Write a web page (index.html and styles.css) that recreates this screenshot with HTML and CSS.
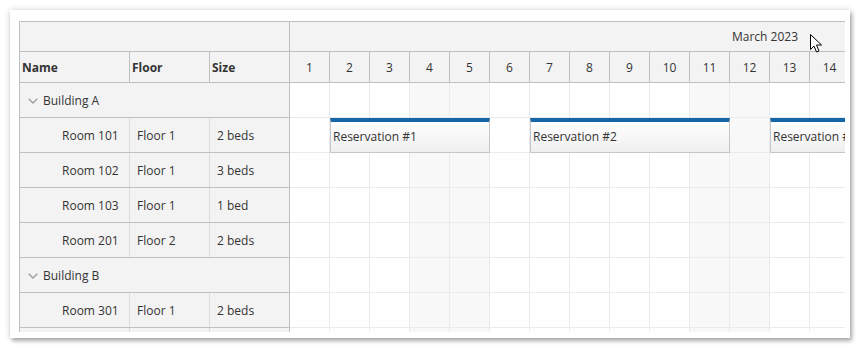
FILE: index.html
```html
<!DOCTYPE html>
<html>
<head>
<meta charset="utf-8">
<link rel="stylesheet" href="styles.css">
</head>
<body>
<div class="window">
  <div class="scheduler">
    <div class="rowheaders">
      <div class="corner"></div>
      <div class="colheads">
        <div class="hc name">Name</div>
        <div class="hc floor">Floor</div>
        <div class="hc size">Size</div>
      </div>
      <div class="rrow group"><svg class="chev" width="10" height="6" viewBox="0 0 10 6"><path d="M0.7 0.7 L5 5 L9.3 0.7" fill="none" stroke="#a0a0a0" stroke-width="1.4"/></svg>Building A</div>
      <div class="rrow"><div class="rc name">Room 101</div><div class="rc floor">Floor 1</div><div class="rc size">2 beds</div></div>
      <div class="rrow"><div class="rc name">Room 102</div><div class="rc floor">Floor 1</div><div class="rc size">3 beds</div></div>
      <div class="rrow"><div class="rc name">Room 103</div><div class="rc floor">Floor 1</div><div class="rc size">1 bed</div></div>
      <div class="rrow"><div class="rc name">Room 201</div><div class="rc floor">Floor 2</div><div class="rc size">2 beds</div></div>
      <div class="rrow group"><svg class="chev" width="10" height="6" viewBox="0 0 10 6"><path d="M0.7 0.7 L5 5 L9.3 0.7" fill="none" stroke="#a0a0a0" stroke-width="1.4"/></svg>Building B</div>
      <div class="rrow"><div class="rc name">Room 301</div><div class="rc floor">Floor 1</div><div class="rc size">2 beds</div></div>
      <div class="rrow"><div class="rc name"></div><div class="rc floor"></div><div class="rc size"></div></div>
    </div>
    <div class="timeline">
      <div class="month"><span>March 2023</span></div>
      <div class="days">
        <div class="day">1</div><div class="day">2</div><div class="day">3</div><div class="day">4</div><div class="day">5</div><div class="day">6</div><div class="day">7</div><div class="day">8</div><div class="day">9</div><div class="day">10</div><div class="day">11</div><div class="day">12</div><div class="day">13</div><div class="day">14</div><div class="day">15</div>
      </div>
      <div class="trow"><div class="cell"></div><div class="cell"></div><div class="cell"></div><div class="cell we"></div><div class="cell we"></div><div class="cell"></div><div class="cell"></div><div class="cell"></div><div class="cell"></div><div class="cell"></div><div class="cell we"></div><div class="cell we"></div><div class="cell"></div><div class="cell"></div><div class="cell"></div></div>
      <div class="trow">
        <div class="cell"></div><div class="cell"></div><div class="cell"></div><div class="cell we"></div><div class="cell we"></div><div class="cell"></div><div class="cell"></div><div class="cell"></div><div class="cell"></div><div class="cell"></div><div class="cell we"></div><div class="cell we"></div><div class="cell"></div><div class="cell"></div><div class="cell"></div>
        <div class="event" style="left:40px;width:160px"><span>Reservation #1</span></div>
        <div class="event" style="left:240px;width:200px"><span>Reservation #2</span></div>
        <div class="event" style="left:480px;width:200px"><span>Reservation #3</span></div>
      </div>
      <div class="trow"><div class="cell"></div><div class="cell"></div><div class="cell"></div><div class="cell we"></div><div class="cell we"></div><div class="cell"></div><div class="cell"></div><div class="cell"></div><div class="cell"></div><div class="cell"></div><div class="cell we"></div><div class="cell we"></div><div class="cell"></div><div class="cell"></div><div class="cell"></div></div>
      <div class="trow"><div class="cell"></div><div class="cell"></div><div class="cell"></div><div class="cell we"></div><div class="cell we"></div><div class="cell"></div><div class="cell"></div><div class="cell"></div><div class="cell"></div><div class="cell"></div><div class="cell we"></div><div class="cell we"></div><div class="cell"></div><div class="cell"></div><div class="cell"></div></div>
      <div class="trow"><div class="cell"></div><div class="cell"></div><div class="cell"></div><div class="cell we"></div><div class="cell we"></div><div class="cell"></div><div class="cell"></div><div class="cell"></div><div class="cell"></div><div class="cell"></div><div class="cell we"></div><div class="cell we"></div><div class="cell"></div><div class="cell"></div><div class="cell"></div></div>
      <div class="trow"><div class="cell"></div><div class="cell"></div><div class="cell"></div><div class="cell we"></div><div class="cell we"></div><div class="cell"></div><div class="cell"></div><div class="cell"></div><div class="cell"></div><div class="cell"></div><div class="cell we"></div><div class="cell we"></div><div class="cell"></div><div class="cell"></div><div class="cell"></div></div>
      <div class="trow"><div class="cell"></div><div class="cell"></div><div class="cell"></div><div class="cell we"></div><div class="cell we"></div><div class="cell"></div><div class="cell"></div><div class="cell"></div><div class="cell"></div><div class="cell"></div><div class="cell we"></div><div class="cell we"></div><div class="cell"></div><div class="cell"></div><div class="cell"></div></div>
      <div class="trow"><div class="cell"></div><div class="cell"></div><div class="cell"></div><div class="cell we"></div><div class="cell we"></div><div class="cell"></div><div class="cell"></div><div class="cell"></div><div class="cell"></div><div class="cell"></div><div class="cell we"></div><div class="cell we"></div><div class="cell"></div><div class="cell"></div><div class="cell"></div></div>
    </div>
  </div>
  <svg class="cursor" width="14" height="21" viewBox="0 0 14 21"><path d="M1.5 1.5 L1.5 16.5 L5 13 L7.5 19 L10 18 L7.5 12 L12.5 12 Z" fill="#fff" stroke="#000" stroke-width="1" stroke-linejoin="miter"/></svg>
</div>
</body>
</html>
```

FILE: styles.css
```css
* { box-sizing: border-box; }
html, body { margin: 0; padding: 0; background: #fff; }
body {
  padding: 10px;
  font-family: "Open Sans", "Noto Sans", sans-serif;
  font-size: 12px;
  color: #333;
}
.window {
  position: relative;
  width: 840px;
  height: 328px;
  background: #fff;
  padding: 11px 0 0 9px;
  box-shadow: 0 0 6px rgba(0,0,0,0.18), 2px 3px 4px rgba(0,0,0,0.28);
}
.scheduler {
  display: flex;
  width: 826px;
  height: 311px;
  overflow: hidden;
  border-top: 1px solid #c0c0c0;
  border-left: 1px solid #c0c0c0;
}
.rowheaders {
  flex: 0 0 270px;
  background: #f3f3f3;
  border-right: 1px solid #c0c0c0;
  display: flex;
  flex-direction: column;
}
.corner {
  height: 30px;
  flex: none;
  border-bottom: 1px solid #c0c0c0;
}
.colheads {
  height: 31px;
  flex: none;
  display: flex;
  border-bottom: 1px solid #c0c0c0;
  font-weight: bold;
}
.hc {
  display: flex;
  align-items: center;
  padding-left: 2px;
  border-right: 1px solid #c0c0c0;
}
.name { width: 110px; }
.floor { width: 80px; }
.size { width: 79px; border-right: none !important; }
.rrow {
  height: 35px;
  flex: none;
  display: flex;
  border-bottom: 1px solid #c0c0c0;
}
.rrow.group {
  align-items: center;
  padding-left: 8px;
}
.chev { margin-right: 5px; margin-top: 1px; }
.rc {
  display: flex;
  align-items: center;
  padding-left: 7px;
  border-right: 1px solid #dcdcdc;
}
.rc.name { padding-left: 42px; }
.timeline {
  flex: 1;
  min-width: 0;
  display: flex;
  flex-direction: column;
}
.month {
  height: 30px;
  flex: none;
  background: #f3f3f3;
  border-bottom: 1px solid #c0c0c0;
  display: flex;
  align-items: center;
  justify-content: flex-end;
  padding-right: 47px;
  padding-bottom: 1px;
}
.days {
  height: 31px;
  flex: none;
  display: flex;
  background: #f3f3f3;
  border-bottom: 1px solid #c0c0c0;
}
.day {
  flex: 0 0 40px;
  border-right: 1px solid #c0c0c0;
  display: flex;
  align-items: center;
  justify-content: center;
}
.trow {
  position: relative;
  height: 35px;
  flex: none;
  display: flex;
  border-bottom: 1px solid #ebebeb;
}
.cell {
  flex: 0 0 40px;
  border-right: 1px solid #ebebeb;
}
.cell.we { background: #f8f8f8; }
.event {
  position: absolute;
  top: 0;
  height: 35px;
  border: 1px solid #c6c6c6;
  border-top: 4px solid #1566a6;
  background: linear-gradient(#ffffff, #efefef);
  display: flex;
  align-items: center;
  padding-left: 2px;
  padding-bottom: 1px;
  white-space: nowrap;
  overflow: hidden;
  color: #333;
}
.cursor {
  position: absolute;
  left: 799px;
  top: 23px;
}
```
